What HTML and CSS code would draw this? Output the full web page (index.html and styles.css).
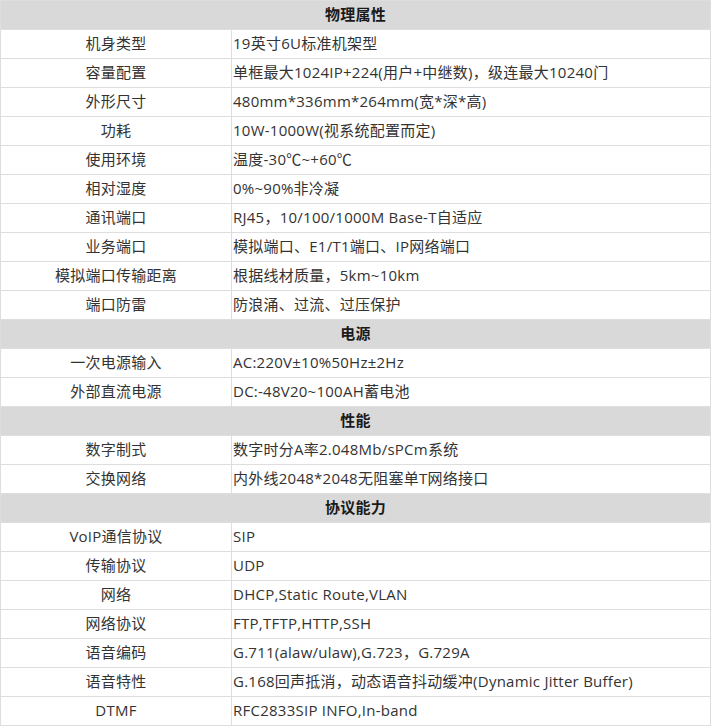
FILE: index.html
```html
<!DOCTYPE html>
<html lang="zh-CN">
<head>
<meta charset="utf-8">
<title>参数</title>
<link rel="stylesheet" href="styles.css">
</head>
<body>
<table class="spec">
  <colgroup><col class="c-label"><col class="c-value"></colgroup>
  <tbody>
    <tr class="sec"><th colspan="2">物理属性</th></tr>
    <tr><td class="lbl">机身类型</td><td class="val">19英寸6U标准机架型</td></tr>
    <tr><td class="lbl">容量配置</td><td class="val">单框最大1024IP+224(用户+中继数)，级连最大10240门</td></tr>
    <tr><td class="lbl">外形尺寸</td><td class="val">480mm*336mm*264mm(宽*深*高)</td></tr>
    <tr><td class="lbl">功耗</td><td class="val">10W-1000W(视系统配置而定)</td></tr>
    <tr><td class="lbl">使用环境</td><td class="val">温度-30℃~+60℃</td></tr>
    <tr><td class="lbl">相对湿度</td><td class="val">0%~90%非冷凝</td></tr>
    <tr><td class="lbl">通讯端口</td><td class="val">RJ45，10/100/1000M Base-T自适应</td></tr>
    <tr><td class="lbl">业务端口</td><td class="val">模拟端口、E1/T1端口、IP网络端口</td></tr>
    <tr><td class="lbl">模拟端口传输距离</td><td class="val">根据线材质量，5km~10km</td></tr>
    <tr><td class="lbl">端口防雷</td><td class="val">防浪涌、过流、过压保护</td></tr>
    <tr class="sec"><th colspan="2">电源</th></tr>
    <tr><td class="lbl">一次电源输入</td><td class="val">AC:220V±10%50Hz±2Hz</td></tr>
    <tr><td class="lbl">外部直流电源</td><td class="val">DC:-48V20~100AH蓄电池</td></tr>
    <tr class="sec"><th colspan="2">性能</th></tr>
    <tr><td class="lbl">数字制式</td><td class="val">数字时分A率2.048Mb/sPCm系统</td></tr>
    <tr><td class="lbl">交换网络</td><td class="val">内外线2048*2048无阻塞单T网络接口</td></tr>
    <tr class="sec"><th colspan="2">协议能力</th></tr>
    <tr><td class="lbl">VoIP通信协议</td><td class="val">SIP</td></tr>
    <tr><td class="lbl">传输协议</td><td class="val">UDP</td></tr>
    <tr><td class="lbl">网络</td><td class="val">DHCP,Static Route,VLAN</td></tr>
    <tr><td class="lbl">网络协议</td><td class="val">FTP,TFTP,HTTP,SSH</td></tr>
    <tr><td class="lbl">语音编码</td><td class="val">G.711(alaw/ulaw),G.723，G.729A</td></tr>
    <tr><td class="lbl">语音特性</td><td class="val">G.168回声抵消，动态语音抖动缓冲(Dynamic Jitter Buffer)</td></tr>
    <tr><td class="lbl">DTMF</td><td class="val">RFC2833SIP INFO,In-band</td></tr>
  </tbody>
</table>
</body>
</html>
```
FILE: styles.css
```css
html, body {
  margin: 0;
  padding: 0;
  background: #ffffff;
}

.spec {
  width: 711px;
  border-collapse: collapse;
  table-layout: fixed;
  font-family: "Open Sans", "Noto Sans CJK SC", sans-serif;
  font-size: 15px;
  letter-spacing: 0.25px;
  color: #333333;
}

.c-label { width: 231px; }

.spec td,
.spec th {
  border: 1px solid #dedede;
  height: 29px;
  padding: 0 3px 2px;
  box-sizing: border-box;
  line-height: 20px;
  white-space: nowrap;
  vertical-align: middle;
}

.spec tr { height: 29px; }

.sec th {
  background: #d9d9d9;
  font-weight: bold;
  color: #1a1a1a;
  text-align: center;
}

.lbl { text-align: center; }
.spec .val { text-align: left; padding-left: 1px; }
```
